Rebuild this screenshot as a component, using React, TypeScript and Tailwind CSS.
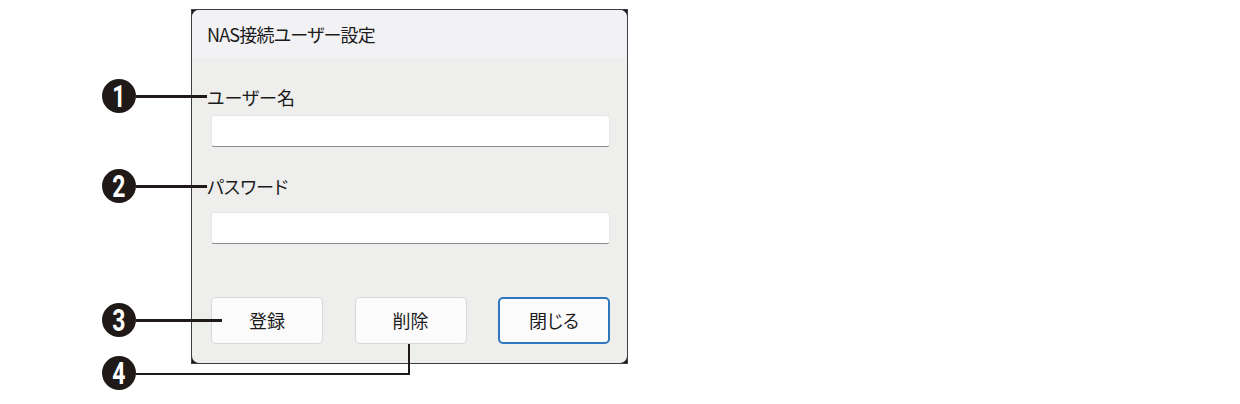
import type { ReactNode } from "react";

const JP_FONT = "font-['Noto_Sans_CJK_JP','Noto_Sans',sans-serif] [font-feature-settings:'palt']";

// numbered callout marker (❶❷❸❹)
function Marker({ n, className }: { n: number; className: string }) {
  return (
    <span
      className={`absolute flex h-[34px] w-[34px] items-center justify-center rounded-full bg-[#1f1a17] ${className}`}
    >
      <span className="inline-block scale-x-[0.74] font-['Roboto',sans-serif] text-[31px] font-bold leading-none text-white">
        {n}
      </span>
    </span>
  );
}

function Label({ children, className }: { children: ReactNode; className: string }) {
  return <div className={`h-[24px] text-[18px] leading-[24px] text-[#1b1b1b] ${className}`}>{children}</div>;
}

function TextBox({ className }: { className: string }) {
  return (
    <div
      className={`h-[32px] w-full rounded-[3px] border border-[#e6e6e6] border-b-[#8c8c8c] bg-white ${className}`}
    />
  );
}

function DialogButton({ children, primary }: { children: ReactNode; primary?: boolean }) {
  return (
    <button
      type="button"
      className={`flex h-[47px] w-[112px] items-center justify-center rounded-[5px] bg-[#fbfbfb] text-[18px] text-[#1b1b1b] ${
        primary ? "border-2 border-[#2f78c0]" : "border border-[#d8d8d8]"
      }`}
    >
      {children}
    </button>
  );
}

export default function App() {
  return (
    <div className={`relative h-[404px] w-[1240px] bg-white pl-[191px] pt-[9px] ${JP_FONT}`}>
      {/* Dialog window */}
      <div className="h-[355px] w-[437px] border border-[#3e3e46] bg-[#1c1b22]">
        <div className="flex h-full flex-col overflow-hidden rounded-[7px] bg-[#eeeeec]">
          <div className="flex h-[48px] shrink-0 items-center bg-[#f2f2f4] pl-[15px] text-[18px] tracking-[-0.8px] text-[#1b1b1b]">
            NAS接続ユーザー設定
          </div>
          <div className="flex flex-col pl-[19px] pr-[17px]">
            <Label className="-ml-[4px] mt-[27px]">ユーザー名</Label>
            <TextBox className="mt-[6px]" />
            <Label className="-ml-[4px] mt-[27px]">パスワード</Label>
            <TextBox className="mt-[14px]" />
            <div className="mt-[53px] flex justify-between">
              <DialogButton>登録</DialogButton>
              <DialogButton>削除</DialogButton>
              <DialogButton primary>閉じる</DialogButton>
            </div>
          </div>
        </div>
      </div>

      {/* Callouts */}
      <Marker n={1} className="left-[102px] top-[79px]" />
      <span className="absolute left-[136px] top-[95px] h-[2.5px] w-[71px] bg-[#1f1a17]" />
      <Marker n={2} className="left-[102px] top-[169px]" />
      <span className="absolute left-[136px] top-[185px] h-[2.5px] w-[71px] bg-[#1f1a17]" />
      <Marker n={3} className="left-[102px] top-[303px]" />
      <span className="absolute left-[136px] top-[319px] h-[2.5px] w-[86px] bg-[#1f1a17]" />
      <Marker n={4} className="left-[102px] top-[356px]" />
      <span className="absolute left-[136px] top-[344px] h-[31px] w-[274px] border-b-[2.5px] border-r-[2.5px] border-[#1f1a17]" />
    </div>
  );
}
